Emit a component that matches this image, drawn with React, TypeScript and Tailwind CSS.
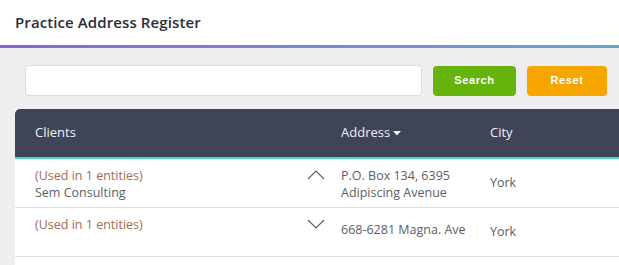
import React from 'react';

const rows = [
  { used: '(Used in 1 entities)', name: 'Sem Consulting', address: ['P.O. Box 134, 6395', 'Adipiscing Avenue'], city: 'York', open: true },
  { used: '(Used in 1 entities)', name: '', address: ['668-6281 Magna. Ave'], city: 'York', open: false },
];

const Chevron: React.FC<{ up: boolean }> = ({ up }) => (
  <svg width="18" height="10" viewBox="0 0 18 10" fill="none">
    <polyline
      points={up ? '1,9 9,1 17,9' : '1,1 9,9 17,1'}
      stroke="#5a5a66"
      strokeWidth="1.1"
    />
  </svg>
);

const App: React.FC = () => {
  return (
    <div className="h-[265px] w-[619px] overflow-hidden bg-[#eeeef0] flex flex-col font-['Open_Sans',sans-serif]">
      {/* Header */}
      <div className="h-[45px] shrink-0 bg-white flex items-center px-[15px]">
        <h1 className="text-[15px] font-semibold text-[#2b2d3a] tracking-[0.1px]">Practice Address Register</h1>
      </div>
      <div className="h-[3px] shrink-0 bg-gradient-to-r from-[#8a62d8] via-[#7a86d6] to-[#68a4c8]" />

      {/* Search bar */}
      <div className="flex items-center pl-[25px] pt-[17px] pb-[13px] gap-[11px]">
        <input className="h-[31px] w-[397px] rounded-[4px] border border-[#dcdce0] bg-white" />
        <button className="h-[30px] w-[83px] rounded-[4px] bg-[#66b30b] text-white text-[11px] font-bold tracking-[0.6px] font-['Liberation_Sans',sans-serif]">
          Search
        </button>
        <button className="h-[30px] w-[80px] rounded-[4px] bg-[#f7a600] text-white text-[11px] font-bold tracking-[0.6px] font-['Liberation_Sans',sans-serif]">
          Reset
        </button>
      </div>

      {/* Table */}
      <div className="ml-[15px] w-[620px] flex-1 bg-white">
        <div className="grid grid-cols-[282px_38px_150px_1fr] h-[50px] items-center bg-[#3f4457] rounded-tl-[5px] border-b-2 border-[#48dbb4] text-[13px] text-[#eef0f6]">
          <div className="pl-5">Clients</div>
          <div />
          <div className="pl-[6px] flex items-center gap-[3px]">
            Address
            <svg width="8" height="5" viewBox="0 0 8 5"><polygon points="0,0 8,0 4,4.5" fill="#eef0f6" /></svg>
          </div>
          <div className="pl-[5px]">City</div>
        </div>
        {rows.map((r, i) => (
          <div
            key={i}
            className="grid grid-cols-[282px_38px_150px_1fr] h-[49px] border-b border-[#dedee2] text-[12.5px] leading-[17px] text-[#5d5d68]"
          >
            <div className="pl-5 pt-[8px]">
              <div className="text-[#a86a50]">{r.used}</div>
              {r.name && <div>{r.name}</div>}
            </div>
            <div className="flex justify-center pt-[11px]">
              <Chevron up={r.open} />
            </div>
            <div className={`pl-[6px] ${r.address.length > 1 ? 'pt-[8px]' : 'pt-[13px]'}`}>
              {r.address.map((a) => (
                <div key={a}>{a}</div>
              ))}
            </div>
            <div className="pl-[5px] flex items-center pb-[1px]">{r.city}</div>
          </div>
        ))}
      </div>
    </div>
  );
};

export default App;
